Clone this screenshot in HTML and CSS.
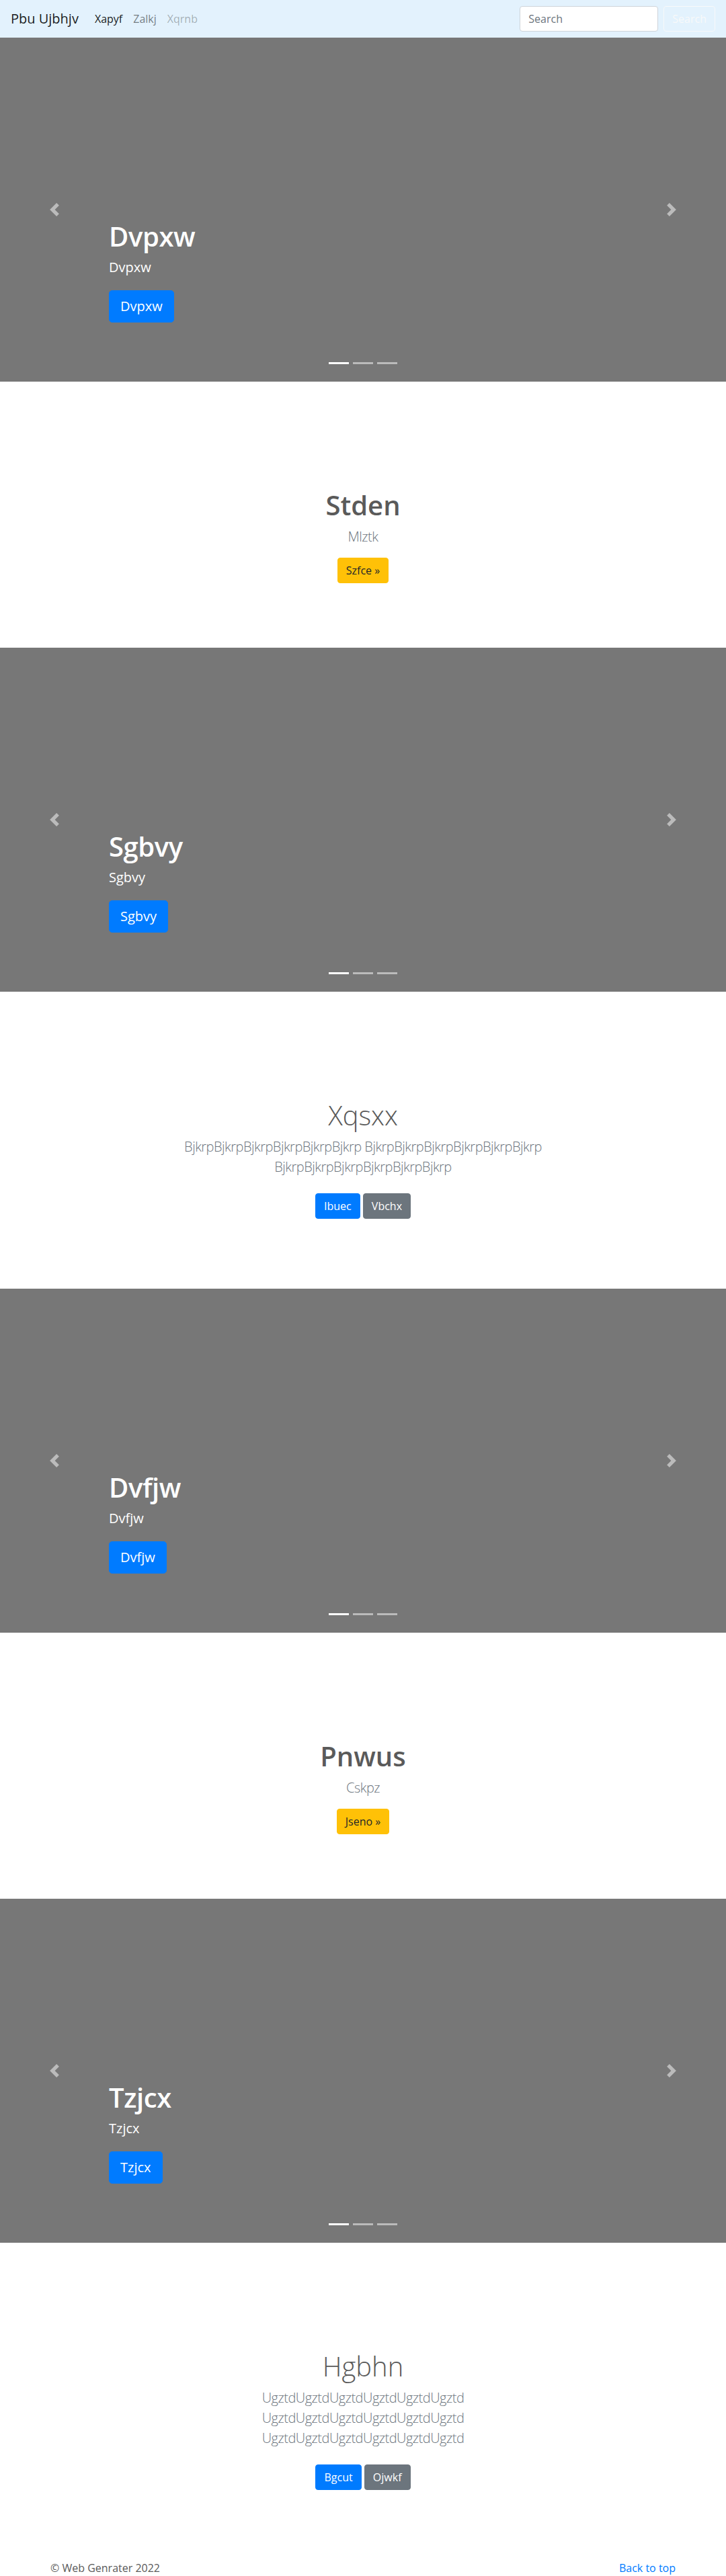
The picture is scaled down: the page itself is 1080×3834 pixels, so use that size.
FILE: index.html
```html
<!DOCTYPE html>
<html lang="en">
<head>
<meta charset="utf-8">
<title>Pbu Ujbhjv</title>
<link rel="stylesheet" href="styles.css">
</head>
<body>
<header class="navbar">
  <a class="brand" href="#">Pbu Ujbhjv</a>
  <nav class="nav">
    <a class="nav-link active" href="#">Xapyf</a>
    <a class="nav-link" href="#">Zalkj</a>
    <a class="nav-link disabled" href="#">Xqrnb</a>
  </nav>
  <form class="search">
    <input class="search-input" type="search" placeholder="Search">
    <button class="btn btn-outline-light" type="button">Search</button>
  </form>
</header>

<main>
  <section class="carousel">
    <a class="control control-prev" href="#"><svg class="control-icon" viewBox="0 0 8 8"><path d="M5.25 0l-4 4 4 4 1.5-1.5L4.25 4l2.5-2.5L5.25 0z"/></svg></a>
    <a class="control control-next" href="#"><svg class="control-icon" viewBox="0 0 8 8"><path d="M2.75 0l-1.5 1.5L3.75 4l-2.5 2.5L2.75 8l4-4-4-4z"/></svg></a>
    <div class="caption">
      <h1 class="caption-title">Dvpxw</h1>
      <p class="caption-text">Dvpxw</p>
      <p class="caption-actions"><a class="btn btn-lg btn-primary" href="#">Dvpxw</a></p>
    </div>
    <ol class="indicators"><li class="indicator active"></li><li class="indicator"></li><li class="indicator"></li></ol>
  </section>

  <section class="intro">
    <div class="intro-inner">
      <h1 class="intro-title bold">Stden</h1>
      <p class="lead">Mlztk</p>
      <p class="actions"><a class="btn btn-warning" href="#">Szfce »</a></p>
    </div>
  </section>

  <section class="carousel">
    <a class="control control-prev" href="#"><svg class="control-icon" viewBox="0 0 8 8"><path d="M5.25 0l-4 4 4 4 1.5-1.5L4.25 4l2.5-2.5L5.25 0z"/></svg></a>
    <a class="control control-next" href="#"><svg class="control-icon" viewBox="0 0 8 8"><path d="M2.75 0l-1.5 1.5L3.75 4l-2.5 2.5L2.75 8l4-4-4-4z"/></svg></a>
    <div class="caption">
      <h1 class="caption-title">Sgbvy</h1>
      <p class="caption-text">Sgbvy</p>
      <p class="caption-actions"><a class="btn btn-lg btn-primary" href="#">Sgbvy</a></p>
    </div>
    <ol class="indicators"><li class="indicator active"></li><li class="indicator"></li><li class="indicator"></li></ol>
  </section>

  <section class="intro">
    <div class="intro-inner">
      <h1 class="intro-title light">Xqsxx</h1>
      <p class="lead">BjkrpBjkrpBjkrpBjkrpBjkrpBjkrp BjkrpBjkrpBjkrpBjkrpBjkrpBjkrp BjkrpBjkrpBjkrpBjkrpBjkrpBjkrp</p>
      <p class="actions"><a class="btn btn-primary spaced" href="#">Ibuec</a> <a class="btn btn-secondary spaced" href="#">Vbchx</a></p>
    </div>
  </section>

  <section class="carousel">
    <a class="control control-prev" href="#"><svg class="control-icon" viewBox="0 0 8 8"><path d="M5.25 0l-4 4 4 4 1.5-1.5L4.25 4l2.5-2.5L5.25 0z"/></svg></a>
    <a class="control control-next" href="#"><svg class="control-icon" viewBox="0 0 8 8"><path d="M2.75 0l-1.5 1.5L3.75 4l-2.5 2.5L2.75 8l4-4-4-4z"/></svg></a>
    <div class="caption">
      <h1 class="caption-title">Dvfjw</h1>
      <p class="caption-text">Dvfjw</p>
      <p class="caption-actions"><a class="btn btn-lg btn-primary" href="#">Dvfjw</a></p>
    </div>
    <ol class="indicators"><li class="indicator active"></li><li class="indicator"></li><li class="indicator"></li></ol>
  </section>

  <section class="intro">
    <div class="intro-inner">
      <h1 class="intro-title bold">Pnwus</h1>
      <p class="lead">Cskpz</p>
      <p class="actions"><a class="btn btn-warning" href="#">Jseno »</a></p>
    </div>
  </section>

  <section class="carousel">
    <a class="control control-prev" href="#"><svg class="control-icon" viewBox="0 0 8 8"><path d="M5.25 0l-4 4 4 4 1.5-1.5L4.25 4l2.5-2.5L5.25 0z"/></svg></a>
    <a class="control control-next" href="#"><svg class="control-icon" viewBox="0 0 8 8"><path d="M2.75 0l-1.5 1.5L3.75 4l-2.5 2.5L2.75 8l4-4-4-4z"/></svg></a>
    <div class="caption">
      <h1 class="caption-title">Tzjcx</h1>
      <p class="caption-text">Tzjcx</p>
      <p class="caption-actions"><a class="btn btn-lg btn-primary" href="#">Tzjcx</a></p>
    </div>
    <ol class="indicators"><li class="indicator active"></li><li class="indicator"></li><li class="indicator"></li></ol>
  </section>

  <section class="intro">
    <div class="intro-inner">
      <h1 class="intro-title light">Hgbhn</h1>
      <p class="lead">UgztdUgztdUgztdUgztdUgztdUgztd UgztdUgztdUgztdUgztdUgztdUgztd UgztdUgztdUgztdUgztdUgztdUgztd</p>
      <p class="actions"><a class="btn btn-primary spaced" href="#">Bgcut</a> <a class="btn btn-secondary spaced" href="#">Ojwkf</a></p>
    </div>
  </section>
</main>

<footer class="footer">
  <p class="footer-text">© Web Genrater 2022</p>
  <p class="footer-text"><a class="footer-link" href="#">Back to top</a></p>
</footer>
</body>
</html>
```

FILE: styles.css
```css
* { box-sizing: border-box; }

html, body {
  margin: 0;
  padding: 0;
}

body {
  font-family: "Open Sans", "Noto Sans", "DejaVu Sans", sans-serif;
  font-size: 16px;
  line-height: 24px;
  color: #5a5a5a;
  background: #fff;
}

a { text-decoration: none; }

/* Navbar */
.navbar {
  display: flex;
  align-items: center;
  height: 56px;
  padding: 8px 16px;
  background-color: #e3f2fd;
}

.brand {
  font-size: 20px;
  line-height: 30px;
  padding: 5px 0;
  margin-right: 16px;
  color: rgba(0, 0, 0, 0.9);
  white-space: nowrap;
}

.nav {
  display: flex;
}

.nav-link {
  padding: 8px;
  color: rgba(0, 0, 0, 0.5);
}

.nav-link.active { color: rgba(0, 0, 0, 0.9); }
.nav-link.disabled { color: rgba(0, 0, 0, 0.3); }

.search {
  margin: 0 0 0 auto;
  display: flex;
  align-items: center;
}

.search-input {
  width: 206px;
  height: 38px;
  margin-right: 8px;
  padding: 6px 12px;
  font-family: inherit;
  font-size: 16px;
  line-height: 24px;
  color: #495057;
  background: #fff;
  border: 1px solid #ced4da;
  border-radius: 4px;
}

.search-input::placeholder { color: #6c757d; }

/* Buttons */
.btn {
  display: inline-block;
  font-family: inherit;
  font-size: 16px;
  font-weight: 400;
  line-height: 24px;
  padding: 6px 12px;
  border: 1px solid transparent;
  border-radius: 4px;
  text-align: center;
  vertical-align: middle;
  cursor: pointer;
}

.btn-lg {
  font-size: 20px;
  line-height: 30px;
  padding: 8px 16px;
  border-radius: 4.8px;
}

.btn-primary { color: #fff; background-color: #007bff; border-color: #007bff; }
.btn-secondary { color: #fff; background-color: #6c757d; border-color: #6c757d; }
.btn-warning { color: #212529; background-color: #ffc107; border-color: #ffc107; }
.btn-outline-light { color: #f8f9fa; background: transparent; border-color: #f8f9fa; }

.spaced { margin: 8px 0; }

/* Carousel */
.carousel {
  position: relative;
  height: 512px;
  background-color: #777;
  overflow: hidden;
}

.control {
  position: absolute;
  top: 0;
  bottom: 0;
  width: 15%;
  display: flex;
  align-items: center;
  justify-content: center;
  opacity: 0.5;
}

.control-prev { left: 0; }
.control-next { right: 0; }

.control-icon {
  width: 20px;
  height: 20px;
  fill: #fff;
}

.caption {
  position: absolute;
  left: 15%;
  right: 15%;
  bottom: 48px;
  padding: 20px 0;
  color: #fff;
  text-align: left;
}

.caption-title {
  margin: 0 0 8px;
  font-size: 40px;
  line-height: 48px;
  font-weight: 600;
  letter-spacing: -0.4px;
}

.caption-text {
  margin: 0 0 20px;
  font-size: 20px;
  line-height: 28px;
}

.caption-actions {
  margin: 0 0 20px;
  display: flex;
}

.indicators {
  position: absolute;
  left: 0;
  right: 0;
  bottom: 0;
  margin: 0 0 16px;
  padding: 0;
  list-style: none;
  display: flex;
  justify-content: center;
}

.indicator {
  width: 30px;
  height: 23px;
  margin: 0 3px;
  border-top: 10px solid transparent;
  border-bottom: 10px solid transparent;
  background-color: #fff;
  background-clip: padding-box;
  opacity: 0.5;
}

.indicator.active { opacity: 1; }

/* Intro sections */
.intro {
  padding: 160px 15px 80px;
  text-align: center;
}

.intro-inner {
  max-width: 610px;
  margin: 0 auto;
}

.intro-title {
  margin: 0 0 8px;
  font-size: 40px;
  line-height: 48px;
  color: #5a5a5a;
}

.intro-title.bold { font-weight: 600; }
.intro-title.light { font-weight: 300; }

.lead {
  max-width: 570px;
  margin: 0 auto 16px;
  font-size: 20px;
  line-height: 30px;
  font-weight: 300;
  letter-spacing: -0.5px;
  color: #6c757d;
}

.actions {
  margin: 0 0 16px;
}

/* Footer */
.footer {
  max-width: 960px;
  margin: 0 auto;
  padding: 0 15px;
  display: flex;
  justify-content: space-between;
}

.footer-text {
  margin: 0 0 16px;
}

.footer-link { color: #007bff; }
```
